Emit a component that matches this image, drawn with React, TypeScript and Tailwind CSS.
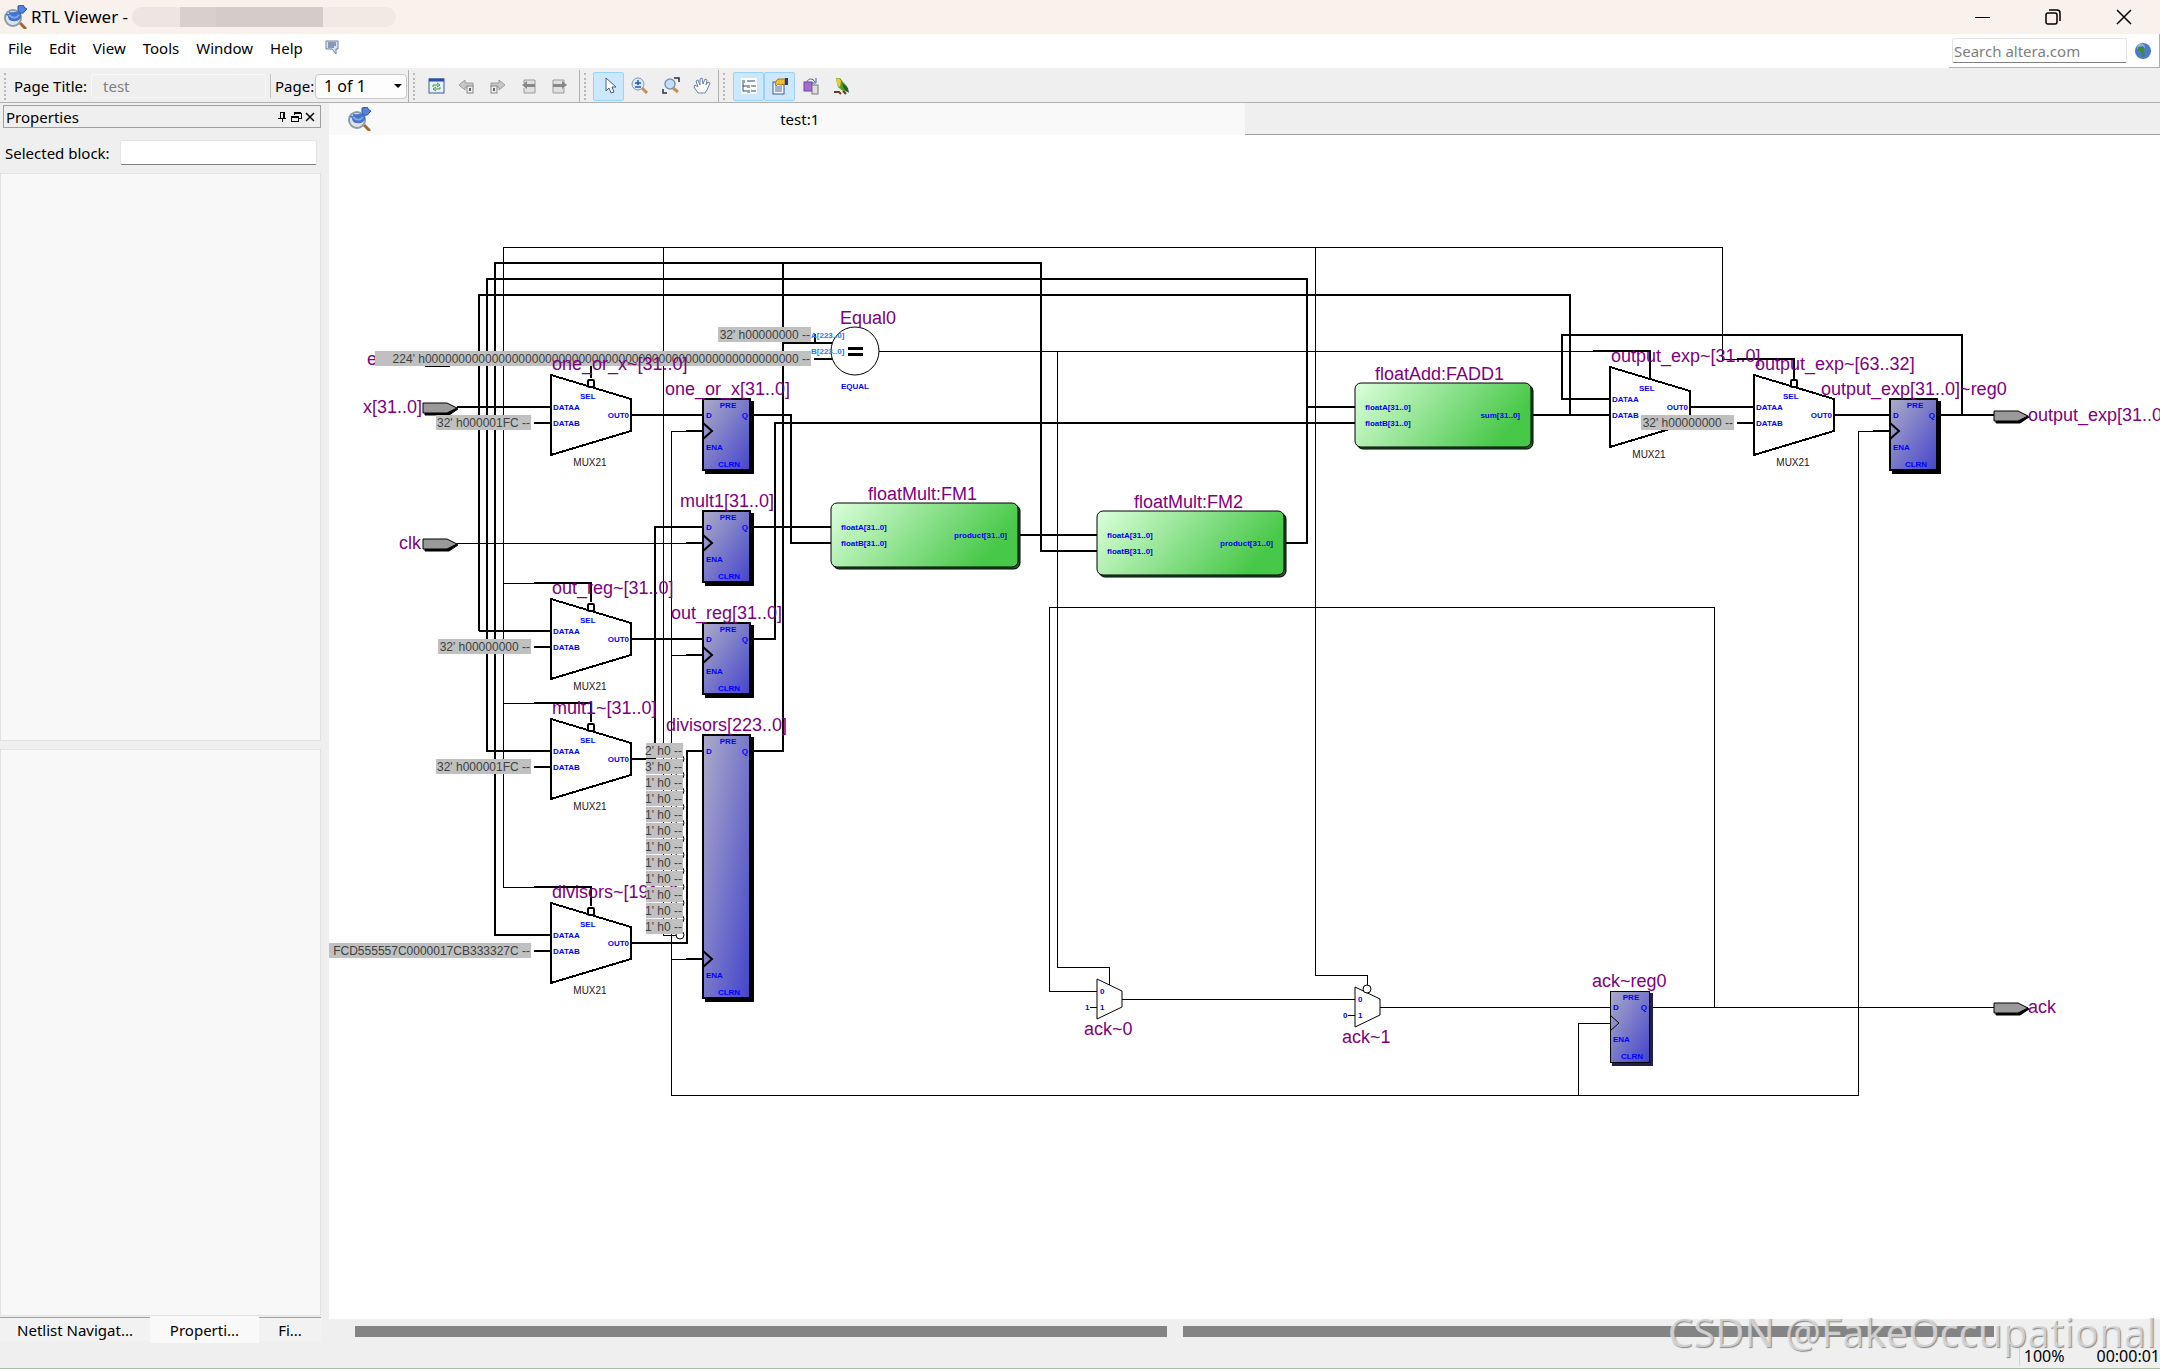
import type { ReactNode } from "react";

const menus = ["File", "Edit", "View", "Tools", "Window", "Help"];

const thickWires = [
  "M479 631V295H1570V415",
  "M551 631H479",
  "M551 751H487V279H1307V543H1283",
  "M551 935H495V263H1041V551H1097",
  "M783 263V751H754",
  "M783 343H832M815 343V334M814 359H832",
  "M457 407H551",
  "M631 415H703",
  "M754 415H791V543H831",
  "M631 639H703",
  "M754 639H775V423H1355",
  "M631 759H655V527H703",
  "M754 527H831",
  "M631 943H687V751H703",
  "M1017 535H1097",
  "M1307 407H1355",
  "M1531 415H1610",
  "M1610 399H1562V335H1962V415",
  "M1691 407H1754",
  "M1834 415H1890",
  "M1941 415H1994",
  "M1593 351H1650V380",
  "M1737 359H1794V379",
  "M591 359V378",
  "M534 583H591V602",
  "M534 703H591V722",
  "M534 887H591V906",
  "M534 423H551M534 647H551M534 767H551M534 951H551M1737 423H1754",
  "M686 431H703M686 543H703M686 655H703M686 959H703M1873 431H1890",
];

const thinWires = [
  "M503 887V247H1722V359H1737",
  "M503 583H534M503 703H534M503 887H534",
  "M663 247V935H677",
  "M457 543H686",
  "M686 431H671V1095H1858V431H1873",
  "M671 655H686M671 959H686",
  "M879 351H1593",
  "M1057 351V967H1109V985",
  "M1315 247V975H1367V985",
  "M1122 999H1355",
  "M1380 1007H1610",
  "M1652 1007H1994",
  "M1714 1007V607H1049V991H1097",
  "M1578 1095V1023H1610",
  "M1090 1007H1097M1348 1015H1355",
  "M425 366H450",
];

const muxes = [
  { x: 551, y: 375, inverted: true },
  { x: 551, y: 599, inverted: true },
  { x: 551, y: 719, inverted: true },
  { x: 551, y: 903, inverted: true },
  { x: 1610, y: 367, inverted: false },
  { x: 1754, y: 375, inverted: true },
];

const registers = [
  { x: 703, y: 399, w: 48, h: 72, thin: false },
  { x: 703, y: 511, w: 48, h: 72, thin: false },
  { x: 703, y: 623, w: 48, h: 72, thin: false },
  { x: 703, y: 735, w: 48, h: 264, thin: false },
  { x: 1890, y: 399, w: 48, h: 72, thin: false },
  { x: 1610, y: 991, w: 40, h: 72, thin: true },
];

const blocks = [
  { x: 831, y: 503, w: 187, out: "product[31..0]" },
  { x: 1097, y: 511, w: 187, out: "product[31..0]" },
  { x: 1355, y: 383, w: 176, out: "sum[31..0]" },
];

const constants = [
  { x: 718, y: 327, w: 93, text: "32' h00000000 --" },
  { x: 375, y: 351, w: 436, text: "224' h" + "0".repeat(56) + " --" },
  { x: 436, y: 415, w: 95, text: "32' h000001FC --" },
  { x: 438, y: 639, w: 93, text: "32' h00000000 --" },
  { x: 436, y: 759, w: 95, text: "32' h000001FC --" },
  { x: 300, y: 943, w: 231, text: "FCD555557C0000017CB333327C --" },
  { x: 1641, y: 415, w: 93, text: "32' h00000000 --" },
];

const bits = ["2' h0 --", "3' h0 --", ...Array(10).fill("1' h0 --")];

const names = [
  { x: 552, y: 370, text: "one_or_x~[31..0]" },
  { x: 665, y: 395, text: "one_or_x[31..0]" },
  { x: 840, y: 324, text: "Equal0" },
  { x: 363, y: 413, text: "x[31..0]" },
  { x: 399, y: 549, text: "clk" },
  { x: 680, y: 507, text: "mult1[31..0]" },
  { x: 552, y: 594, text: "out_reg~[31..0]" },
  { x: 671, y: 619, text: "out_reg[31..0]" },
  { x: 552, y: 714, text: "mult1~[31..0]" },
  { x: 666, y: 731, text: "divisors[223..0]" },
  { x: 868, y: 500, text: "floatMult:FM1" },
  { x: 1134, y: 508, text: "floatMult:FM2" },
  { x: 1375, y: 380, text: "floatAdd:FADD1" },
  { x: 1611, y: 362, text: "output_exp~[31..0]" },
  { x: 1755, y: 370, text: "output_exp~[63..32]" },
  { x: 1821, y: 395, text: "output_exp[31..0]~reg0" },
  { x: 2028, y: 421, text: "output_exp[31..0]" },
  { x: 1084, y: 1035, text: "ack~0" },
  { x: 1342, y: 1043, text: "ack~1" },
  { x: 1592, y: 987, text: "ack~reg0" },
  { x: 2028, y: 1013, text: "ack" },
];

function Mux({ x, y, inverted }: { x: number; y: number; inverted: boolean }) {
  return (
    <g>
      <path
        d={`M${x} ${y}L${x + 80} ${y + 24}V${y + 56}L${x} ${y + 80}Z`}
        fill="#fff"
        stroke="#000"
        strokeWidth="2"
        shapeRendering="crispEdges"
      />
      {inverted && (
        <rect x={x + 37} y={y + 5} width="6" height="7" rx="1" fill="#fff" stroke="#000" strokeWidth="2" />
      )}
      <g className="text-[8px] font-bold" fill="#0000ff">
        <text x={x + 29} y={y + 24}>SEL</text>
        <text x={x + 2} y={y + 35}>DATAA</text>
        <text x={x + 2} y={y + 51}>DATAB</text>
        <text x={x + 78} y={y + 43} textAnchor="end">OUT0</text>
      </g>
      <text x={x + 39} y={y + 91} textAnchor="middle" className="text-[10px]" fill="#301010">
        MUX21
      </text>
    </g>
  );
}

function Register({ x, y, w, h, thin }: { x: number; y: number; w: number; h: number; thin: boolean }) {
  const clock = y + h - 40;
  return (
    <g>
      <rect x={x + 2} y={y + 2} width={w + 1} height={h + 1} fill={thin ? "#20204c" : "#000"} />
      <rect
        x={x}
        y={y}
        width={w - 1}
        height={h - 1}
        fill="url(#register)"
        stroke="#000"
        strokeWidth={thin ? 1 : 2}
        shapeRendering="crispEdges"
      />
      <path d={`M${x} ${clock - 8}L${x + 9} ${clock}L${x} ${clock + 8}`} fill="none" stroke="#000" strokeWidth={thin ? 1 : 2} />
      <g className="text-[8px] font-bold" fill="#0000ff">
        <text x={x + w / 2 + 1} y={y + 9} textAnchor="middle">PRE</text>
        <text x={x + 3} y={y + 19}>D</text>
        <text x={x + w - 3} y={y + 19} textAnchor="end">Q</text>
        <text x={x + 3} y={clock + 19}>ENA</text>
        <text x={x + w / 2 + 2} y={clock + 36} textAnchor="middle">CLRN</text>
      </g>
    </g>
  );
}

function Block({ x, y, w, out }: { x: number; y: number; w: number; out: string }) {
  return (
    <g>
      <rect x={x + 2} y={y + 2} width={w} height="64" rx="6" fill="#1f5c2c" stroke="#000" />
      <rect x={x} y={y} width={w} height="64" rx="6" fill="url(#block)" stroke="#000" />
      <g className="text-[8px] font-bold" fill="#0000ff">
        <text x={x + 10} y={y + 27}>floatA[31..0]</text>
        <text x={x + 10} y={y + 43}>floatB[31..0]</text>
        <text x={x + w - 11} y={y + 35} textAnchor="end">{out}</text>
      </g>
    </g>
  );
}

function Pin({ x, y }: { x: number; y: number }) {
  return (
    <g stroke="#000">
      <path d={`M${x + 2} ${y - 3}H${x + 26}L${x + 35} ${y + 1}L${x + 26} ${y + 7}H${x + 2}Z`} fill="#000" />
      <path d={`M${x} ${y - 5}H${x + 24}L${x + 34} ${y}L${x + 24} ${y + 5}H${x}Z`} fill="#9a9a9a" />
    </g>
  );
}

function Constant({ x, y, w, text }: { x: number; y: number; w: number; text: string }) {
  return (
    <g>
      <rect x={x} y={y} width={w} height="15" fill="#c0c0c0" />
      <text x={x + w - 1} y={y + 12} textAnchor="end" className="text-[12px]" fill="#404040">
        {text}
      </text>
    </g>
  );
}

function SmallMux({ x, y, side, name }: { x: number; y: number; side: string; name: string }) {
  return (
    <g className="text-[8px] font-bold" fill="#0000ff">
      <title>{name}</title>
      <path d={`M${x} ${y}L${x + 25} ${y + 12}V${y + 28}L${x} ${y + 40}Z`} fill="#fff" stroke="#000" />
      <text x={x + 3} y={y + 15}>0</text>
      <text x={x + 3} y={y + 31}>1</text>
      <text x={x - 12} y={y + 31}>{side}</text>
    </g>
  );
}

function Schematic() {
  return (
    <svg className="block h-full w-full font-['Liberation_Sans',Arial,sans-serif]" role="img" aria-label="test:1">
      <defs>
        <linearGradient id="register" x1="0" y1="0" x2="1" y2="1">
          <stop offset="0" stopColor="#acacc8" />
          <stop offset="1" stopColor="#4444cc" />
        </linearGradient>
        <linearGradient id="block" x1="0" y1="0" x2="1" y2="0.3">
          <stop offset="0" stopColor="#dcffdc" />
          <stop offset="1" stopColor="#48c848" />
        </linearGradient>
      </defs>
      <g transform="translate(-329 -135)">
        <g fill="none" stroke="#000" shapeRendering="crispEdges">
          <path d={thinWires.join("")} strokeWidth="1" />
          <path d={thickWires.join("")} strokeWidth="2" />
        </g>
        <circle cx="855" cy="351" r="24" fill="#fff" stroke="#000" />
        <path d="M815 343H832M815 359H832" stroke="#000" strokeWidth="2" shapeRendering="crispEdges" />
        <path d="M848 348H863M848 354H863" stroke="#000" strokeWidth="3" shapeRendering="crispEdges" />
        <g className="text-[8px] font-bold" fill="#1080ff">
          <text x="811" y="338">A[223..0]</text>
          <text x="811" y="354">B[223..0]</text>
          <text x="841" y="389" fill="#0000ff">EQUAL</text>
        </g>
        {muxes.map((mux) => (
          <Mux key={`${mux.x}-${mux.y}`} {...mux} />
        ))}
        {registers.map((register) => (
          <Register key={`${register.x}-${register.y}`} {...register} />
        ))}
        {blocks.map((block) => (
          <Block key={block.x} {...block} />
        ))}
        <SmallMux x={1097} y={979} side="1" name="ack~0" />
        <SmallMux x={1355} y={987} side="0" name="ack~1" />
        <circle cx="1367" cy="989" r="4" fill="#fff" stroke="#000" />
        <Pin x={423} y={408} />
        <Pin x={423} y={544} />
        <Pin x={1994} y={416} />
        <Pin x={1994} y={1008} />
        <text x="367" y="365" className="text-[18px]" fill="#800080">e</text>
        <text x="552" y="898" className="text-[18px]" fill="#800080">divisors~[191..0]</text>
        {constants.map((constant) => (
          <Constant key={`${constant.x}-${constant.y}`} {...constant} />
        ))}
        {bits.map((bit, i) => (
          <g key={i}>
            <circle cx="680" cy={759 + i * 16} r="4" fill="#fff" stroke="#000" />
            <Constant x={646} y={743 + i * 16} w={37} text={bit} />
          </g>
        ))}
        <g className="text-[18px]" fill="#800080">
          {names.map((name) => (
            <text key={name.text} x={name.x} y={name.y}>
              {name.text}
            </text>
          ))}
        </g>
      </g>
    </svg>
  );
}

function AppIcon() {
  return (
    <svg className="size-6 shrink-0" viewBox="0 0 24 24" aria-hidden="true">
      <path d="M17 18L23 24" stroke="#a8672a" strokeWidth="3" />
      <circle cx="10" cy="13" r="8" fill="#dbe5ee" stroke="#8e9aa3" strokeWidth="2" />
      <path d="M2 9H6V7C11 8 15 5 18 8C19 14 15 17 10 16C7 16 5 14 5 11Z" fill="#4474cc" />
      <path d="M6 10C9 13 13 14 16 10" fill="none" stroke="#82a8ec" strokeWidth="2" />
      <path d="M15 1L20 0L22 3L24 4L22 6C20 10 16 8 15 5Z" fill="#5482dc" stroke="#2c52a4" />
    </svg>
  );
}

function Tool({ label, active = false, children }: { label: string; active?: boolean; children: ReactNode }) {
  return (
    <button
      type="button"
      aria-label={label}
      aria-pressed={active}
      className={
        active
          ? "flex h-[29px] w-[31px] items-center justify-center rounded-[2px] border border-[#99d1ff] bg-[#cce8ff]"
          : "flex h-[29px] w-[31px] items-center justify-center"
      }
    >
      <svg className="size-4 overflow-visible" viewBox="0 0 16 16" fill="none">
        {children}
      </svg>
    </button>
  );
}

function Grip() {
  return <span className="mx-1 h-[27px] border-l-2 border-dotted border-[#b8b8b8]" />;
}

function TitleBar() {
  return (
    <header className="flex h-[34px] shrink-0 items-center bg-[#f9f1ec] pl-[3px]">
      <AppIcon />
      <h1 className="ml-1 text-[17px]">RTL Viewer -</h1>
      <div className="ml-1 flex h-5 w-[264px] overflow-hidden rounded-full">
        <span className="w-12 bg-[#ece5e2]" />
        <span className="w-9 bg-[#d8d0cd]" />
        <span className="w-[107px] bg-[#d5cbc8]" />
        <span className="flex-1 bg-[#f2e9e5]" />
      </div>
      <div className="ml-auto flex h-full">
        <button type="button" aria-label="Minimize" className="flex w-[70px] items-center justify-center">
          <svg className="size-4" viewBox="0 0 16 16" stroke="#000" fill="none">
            <path d="M0 8H15" shapeRendering="crispEdges" />
          </svg>
        </button>
        <button type="button" aria-label="Restore" className="flex w-[70px] items-center justify-center">
          <svg className="size-4" viewBox="0 0 16 16" stroke="#000" fill="none" strokeWidth="1.5">
            <rect x="1" y="4" width="11" height="11" rx="2" />
            <path d="M4 1H12Q15 1 15 4V12" />
          </svg>
        </button>
        <button type="button" aria-label="Close" className="flex w-[72px] items-center justify-center">
          <svg className="size-4" viewBox="0 0 16 16" stroke="#000" fill="none" strokeWidth="1.5">
            <path d="M1 1L15 15M15 1L1 15" />
          </svg>
        </button>
      </div>
    </header>
  );
}

function MenuBar() {
  return (
    <nav className="flex h-9 shrink-0 border-b-2 border-[#f0f0f0] bg-white">
      <div className="flex items-center gap-[17px] pb-1.5 pl-2">
        {menus.map((menu) => (
          <button type="button" key={menu}>
            {menu}
          </button>
        ))}
        <button type="button" aria-label="Feedback" className="ml-1">
          <svg className="size-4" viewBox="0 0 16 16" fill="none">
            <path d="M2 1H14V9H12V14L8 9H2Z" fill="#d5e2f7" stroke="#6c83a8" />
            <path d="M4 3H12M4 5H12M4 7H10" stroke="#36517f" />
          </svg>
        </button>
      </div>
      <form className="ml-auto flex items-center gap-2 border-b border-r border-[#b0b0b0] pl-[3px] pr-2">
        <input
          type="search"
          aria-label="Search altera.com"
          placeholder="Search altera.com"
          className="h-[25px] w-[175px] rounded-[2px] border border-[#e4e4e4] border-b-[#808080] px-px placeholder:text-[#808080]"
        />
        <button type="button" aria-label="Search">
          <svg className="size-4" viewBox="0 0 16 16">
            <circle cx="8" cy="8" r="8" fill="#4d79cf" />
            <circle cx="6" cy="5" r="4" fill="#8fb4ee" />
            <path d="M3 4L8 3L10 6L9 9L10 13L7 14L6 9L2 8ZM14 8L16 7L15 10Z" fill="#3c8a3c" />
          </svg>
        </button>
      </form>
    </nav>
  );
}

function ToolBar() {
  return (
    <div className="flex h-[33px] shrink-0 items-center border-b border-[#b0b0b0]">
      <div className="flex h-full w-[409px] items-center border-r border-[#b0b0b0]">
        <Grip />
        <label htmlFor="page-title" className="ml-1 w-[77px] whitespace-nowrap">
          Page Title:
        </label>
        <input
          id="page-title"
          disabled
          defaultValue="test"
          className="h-6 w-[175px] rounded-[2px] border border-[#f8f8f8] px-[11px] text-[#808080]"
        />
        <span className="mx-1 h-6 border-l border-[#c4c4c4]" />
        <label htmlFor="page" className="w-10 whitespace-nowrap">
          Page:
        </label>
        <div className="relative">
          <select
            id="page"
            className="h-[25px] w-[92px] appearance-none rounded-[4px] border border-[#c8c8c8] bg-[#fdfdfd] px-2 text-base leading-5"
          >
            <option>1 of 1</option>
          </select>
          <svg className="pointer-events-none absolute right-[5px] top-[10px] h-1 w-2" viewBox="0 0 8 4">
            <path d="M0 0H8L4 4Z" />
          </svg>
        </div>
      </div>
      <div className="flex h-full w-[171px] items-center border-r border-[#b0b0b0]">
        <Grip />
        <div className="ml-px flex">
          <Tool label="Refresh">
            <rect x="1" y="1" width="15" height="14" fill="#e8f2fc" stroke="#3c5c9c" />
            <path d="M1 2H16" stroke="#2850a8" strokeWidth="3" />
            <path d="M5 9V7H10M9 5L12 7L9 9M12 9V11H7M8 9L5 11L8 13" stroke="#379a28" />
          </Tool>
          <Tool label="Back">
            <path d="M0 7L6 2V5H14V9H6V12Z" fill="#c8c8c8" stroke="#9c9c9c" />
            <rect x="8" y="8" width="6" height="7" fill="#eee" stroke="#888" />
            <path d="M10 10H12V13H10Z" fill="#666" />
          </Tool>
          <Tool label="Forward">
            <path d="M15 7L9 2V5H1V9H9V12Z" fill="#c8c8c8" stroke="#9c9c9c" />
            <rect x="1" y="8" width="6" height="7" fill="#eee" stroke="#888" />
            <path d="M3 10H5V13H3Z" fill="#666" />
          </Tool>
          <Tool label="Previous page">
            <path d="M3 5V2H14V15H3V10" fill="#e0e0e0" stroke="#999" />
            <path d="M1 7L6 3V6H14V9H6V11Z" fill="#888" />
          </Tool>
          <Tool label="Next page">
            <path d="M12 5V2H1V15H12V10" fill="#e0e0e0" stroke="#999" />
            <path d="M15 7L10 3V6H1V9H10V11Z" fill="#888" />
          </Tool>
        </div>
      </div>
      <div className="flex h-full w-[139px] items-center border-r border-[#b0b0b0]">
        <Grip />
        <div className="ml-[3px] flex">
          <Tool label="Selection tool" active>
            <path d="M5 0V13L8 10L10 15L13 14L11 9H15Z" fill="#fff" stroke="#4c5c88" />
          </Tool>
          <Tool label="Zoom tool">
            <path d="M10 10L15 15" stroke="#cf8e4c" strokeWidth="3" />
            <circle cx="6" cy="6" r="6" fill="#dce9fb" stroke="#7a98c4" />
            <path d="M6 2V7M3 5H9M3 9H9" stroke="#2458c0" strokeWidth="1.5" />
          </Tool>
          <Tool label="Fit in window">
            <path d="M10 10L15 14" stroke="#cf8e4c" strokeWidth="3" />
            <circle cx="7" cy="6" r="5" fill="#c8def6" stroke="#7a98b4" strokeWidth="1.5" />
            <path d="M11 0H16V4M0 11V15H4" stroke="#26344e" strokeWidth="1.5" />
          </Tool>
          <Tool label="Hand tool">
            <path d="M4 15L0 9L1 7L4 9L2 3L4 2L6 7V1L8 0L9 6L11 1L13 2L12 7L14 4L16 5L13 12L11 15Z" fill="#fff" stroke="#6880b8" />
          </Tool>
        </div>
      </div>
      <div className="flex h-full items-center">
        <Grip />
        <div className="ml-1 flex">
          <Tool label="Netlist navigator" active>
            <path d="M0 0H16V16H0Z" fill="#fff" />
            <path d="M2 3V13H7M2 8H7M6 3H14M10 8H15M10 13H15" stroke="#30487c" />
            <path d="M1 2H4V5H1ZM6 7H9V10H6ZM6 12H9V15H6Z" fill="#92a8a0" />
          </Tool>
          <Tool label="Properties" active>
            <rect x="1" y="4" width="11" height="12" fill="#f2f7ff" stroke="#3b5a9c" />
            <path d="M3 9H10M3 11H10M3 13H10" stroke="#506ca8" />
            <path d="M3 5L6 1H13V6L8 7L6 6L4 8Z" fill="#f4bd34" stroke="#a87818" />
            <path d="M13 0H16V7H13Z" fill="#203c88" />
          </Tool>
          <Tool label="Compare">
            <rect x="1" y="4" width="8" height="9" fill="#a66cd4" stroke="#66459c" />
            <rect x="9" y="7" width="6" height="9" fill="#ddd" stroke="#777" />
            <path d="M4 4C5 0 10 0 12 4M13 0V5H9" stroke="#3864bc" />
          </Tool>
          <Tool label="Bird's eye view">
            <path d="M0 14H5L7 16M9 13L12 16" stroke="#6c3c20" strokeWidth="2" />
            <path d="M2 0L6 0L9 4L13 8L14 14L9 13L4 9L3 5Z" fill="#5b9c22" />
            <path d="M2 1L5 0L7 3L6 9L4 8Z" fill="#f0c93c" />
            <path d="M8 5L14 10L15 15L10 11Z" fill="#24602a" />
          </Tool>
        </div>
      </div>
    </div>
  );
}

function PropertiesPanel() {
  return (
    <aside className="flex w-[329px] shrink-0 flex-col pr-2 pt-[2px]">
      <div className="ml-[3px] flex h-[23px] items-center border border-[#a0a0a0] pl-[2px] pr-1">
        <h2>Properties</h2>
        <div className="ml-auto flex gap-[2px]">
          <button type="button" aria-label="Pin">
            <svg className="size-3" viewBox="0 0 12 12" fill="none" stroke="#000" shapeRendering="crispEdges">
              <path d="M4 7V1H8V7M2 7H10M6 7V11M7 1V7" />
            </svg>
          </button>
          <button type="button" aria-label="Float">
            <svg className="size-3" viewBox="0 0 12 12" fill="none" stroke="#000" shapeRendering="crispEdges">
              <path d="M4 4V2H11V7H8M4 1H11M1 5H8V10H1ZM1 6H8" />
            </svg>
          </button>
          <button type="button" aria-label="Close panel">
            <svg className="size-3" viewBox="0 0 12 12" fill="none" stroke="#000" strokeWidth="1.5">
              <path d="M2 2L10 10M10 2L2 10" />
            </svg>
          </button>
        </div>
      </div>
      <div className="flex items-center justify-between pb-2 pl-[5px] pr-1 pt-3">
        <label htmlFor="selected-block">Selected block:</label>
        <input
          id="selected-block"
          className="h-[25px] w-[197px] rounded-[2px] border border-[#e4e4e4] border-b-[#808080] bg-white px-1"
        />
      </div>
      <div className="flex-1 border border-[#e2e2e2] bg-[#f8f8f8]" />
      <div className="mt-2 flex-1 border border-[#e2e2e2] bg-[#f8f8f8]" />
      <div role="tablist" className="flex h-[27px] items-start">
        <button type="button" role="tab" className="mt-px h-6 w-[150px] border-t border-[#a0a0a0] bg-[#f2f2f2]">
          Netlist Navigat...
        </button>
        <button type="button" role="tab" aria-selected="true" className="h-[27px] w-[109px] bg-[#f9f9f9]">
          Properti...
        </button>
        <button type="button" role="tab" className="mt-px h-6 flex-1 border-t border-[#a0a0a0] bg-[#f2f2f2]">
          Fi...
        </button>
      </div>
      <div className="h-[25px]" />
    </aside>
  );
}

export default function App() {
  return (
    <div className="relative flex h-screen flex-col overflow-hidden border-b border-[#a6c0a6] bg-[#efefef] font-['Noto_Sans',sans-serif] text-[15px] leading-5 text-black">
      <TitleBar />
      <MenuBar />
      <ToolBar />
      <div className="flex min-h-0 flex-1">
        <PropertiesPanel />
        <main className="flex min-w-0 flex-1 flex-col">
          <div role="tablist" className="flex h-8 shrink-0">
            <button type="button" role="tab" aria-selected="true" className="flex w-1/2 items-center bg-[#f9f9f9] pl-[18px]">
              <AppIcon />
              <span className="flex-1 pr-4">test:1</span>
            </button>
            <div className="flex-1 border-b border-[#a0a0a0]" />
          </div>
          <div className="min-h-0 flex-1 overflow-hidden bg-white">
            <Schematic />
          </div>
          <div className="flex h-[25px] shrink-0 items-center gap-4 pl-[26px] pr-[166px]">
            <div className="h-[11px] flex-1 bg-[#848484]" />
            <div className="h-[11px] flex-1 bg-[#848484]" />
          </div>
          <footer className="flex h-6 shrink-0 items-center justify-end gap-8 text-base leading-5">
            <span className="border-l border-[#d4d4d4] pl-1">100%</span>
            <span>00:00:01</span>
          </footer>
        </main>
      </div>
      <div className="pointer-events-none absolute bottom-4 right-1 text-[40px] leading-10 text-white/60 [text-shadow:1px_1px_1px_#888]">
        CSDN @FakeOccupational
      </div>
    </div>
  );
}
